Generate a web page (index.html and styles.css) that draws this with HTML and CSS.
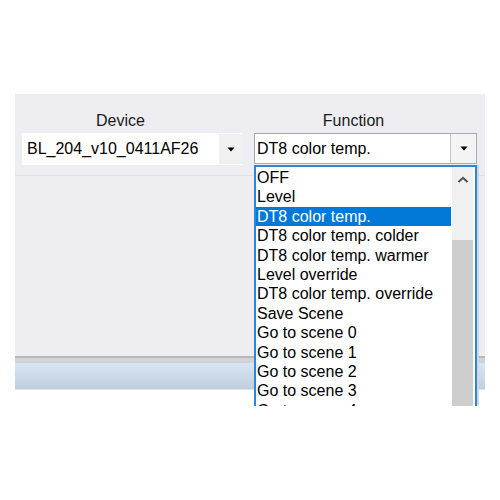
FILE: index.html
```html
<!DOCTYPE html>
<html>
<head>
<meta charset="utf-8">
<link rel="stylesheet" href="styles.css">
</head>
<body>
<div class="panel">
  <div class="top">
    <div class="field">
      <div class="label">Device</div>
      <div class="combo device">
        <span class="value">BL_204_v10_0411AF26</span>
        <span class="btn"><svg width="8" height="5" viewBox="0 0 8 5"><path d="M0.5 0.5 H7.5 L4 4.5 Z" fill="#000"/></svg></span>
      </div>
    </div>
    <div class="field">
      <div class="label">Function</div>
      <div class="combo func">
        <span class="value">DT8 color temp.</span>
        <span class="btn"><svg width="8" height="5" viewBox="0 0 8 5"><path d="M0.5 0.5 H7.5 L4 4.5 Z" fill="#000"/></svg></span>
      </div>
    </div>
  </div>
  <div class="lower"></div>
  <div class="divider"></div>
  <div class="statusbar"></div>

  <div class="dropdown">
    <ul class="items">
      <li>OFF</li>
      <li>Level</li>
      <li class="sel">DT8 color temp.</li>
      <li>DT8 color temp. colder</li>
      <li>DT8 color temp. warmer</li>
      <li>Level override</li>
      <li>DT8 color temp. override</li>
      <li>Save Scene</li>
      <li>Go to scene 0</li>
      <li>Go to scene 1</li>
      <li>Go to scene 2</li>
      <li>Go to scene 3</li>
      <li>Go to scene 4</li>
    </ul>
    <div class="scroll">
      <div class="arrow"><svg width="12" height="8" viewBox="0 0 12 8"><path d="M1.5 6 L6 1.8 L10.5 6" fill="none" stroke="#505050" stroke-width="2"/></svg></div>
      <div class="track"></div>
      <div class="thumb"></div>
    </div>
  </div>
</div>
</body>
</html>
```

FILE: styles.css
```css
html, body {
  margin: 0;
  padding: 0;
  background: #ffffff;
}
body {
  width: 500px;
  height: 500px;
  overflow: hidden;
  font-family: "Liberation Sans", Arial, sans-serif;
  font-size: 16px;
  color: #000;
}
.panel {
  position: relative;
  margin: 94px 0 0 15px;
  width: 470px;
  background: #eeeef2;
}
.top {
  box-sizing: border-box;
  height: 82px;
  padding: 17px 0 0 7px;
  display: grid;
  grid-template-columns: 221px 223px;
  column-gap: 11px;
  border-bottom: 1px solid #e2e2e6;
}
.field {
  display: flex;
  flex-direction: column;
  gap: 3px;
}
.label {
  line-height: 19px;
  text-align: center;
  padding-right: 24px;
  color: #1a1a1a;
}
.combo {
  box-sizing: border-box;
  height: 32px;
  display: flex;
  background: #fff;
}
.combo .value {
  flex: 1;
  line-height: 32px;
  padding-left: 5px;
}
.combo .btn {
  display: flex;
  align-items: center;
  justify-content: center;
}
.device .btn {
  width: 24px;
  background: #f0f0f0;
  margin: 1px 0;
}
.func {
  border: 1px solid #ababab;
  height: 31px;
}
.func .value {
  line-height: 29px;
  padding-left: 2px;
}
.func .btn {
  width: 25px;
  border-left: 1px solid #c4c4c4;
  background: #f4f4f4;
}
.lower {
  height: 180px;
}
.divider {
  height: 2px;
  background: #b9b9bc;
  border-bottom: 5px solid #d2d2d6;
}
.statusbar {
  height: 26px;
  background: linear-gradient(#d8e5f2, #bfcfdd);
  border-bottom: 1px solid #dde6ee;
}
.dropdown {
  position: absolute;
  left: 239px;
  top: 71px;
  box-sizing: border-box;
  width: 223px;
  height: 241px;
  border: 2px solid #2a87d9;
  border-bottom: none;
  background: #fff;
  display: grid;
  grid-template-columns: 195px 21px;
  column-gap: 1px;
  overflow: hidden;
  box-shadow: 2px 0 0 #d6d6da;
}
.items {
  list-style: none;
  margin: 0;
  padding: 1px 0 0 0;
}
.items li {
  height: 19.4px;
  line-height: 19.4px;
  padding-left: 1px;
  white-space: nowrap;
}
.items li.sel {
  background: #0078d7;
  color: #fff;
}
.scroll {
  display: flex;
  flex-direction: column;
  background: #f0f0f0;
}
.arrow {
  height: 22px;
  display: flex;
  align-items: center;
  justify-content: center;
  padding-top: 4px;
  box-sizing: border-box;
}
.track {
  height: 51px;
}
.thumb {
  flex: 1;
  background: #cdcdcd;
}
```
